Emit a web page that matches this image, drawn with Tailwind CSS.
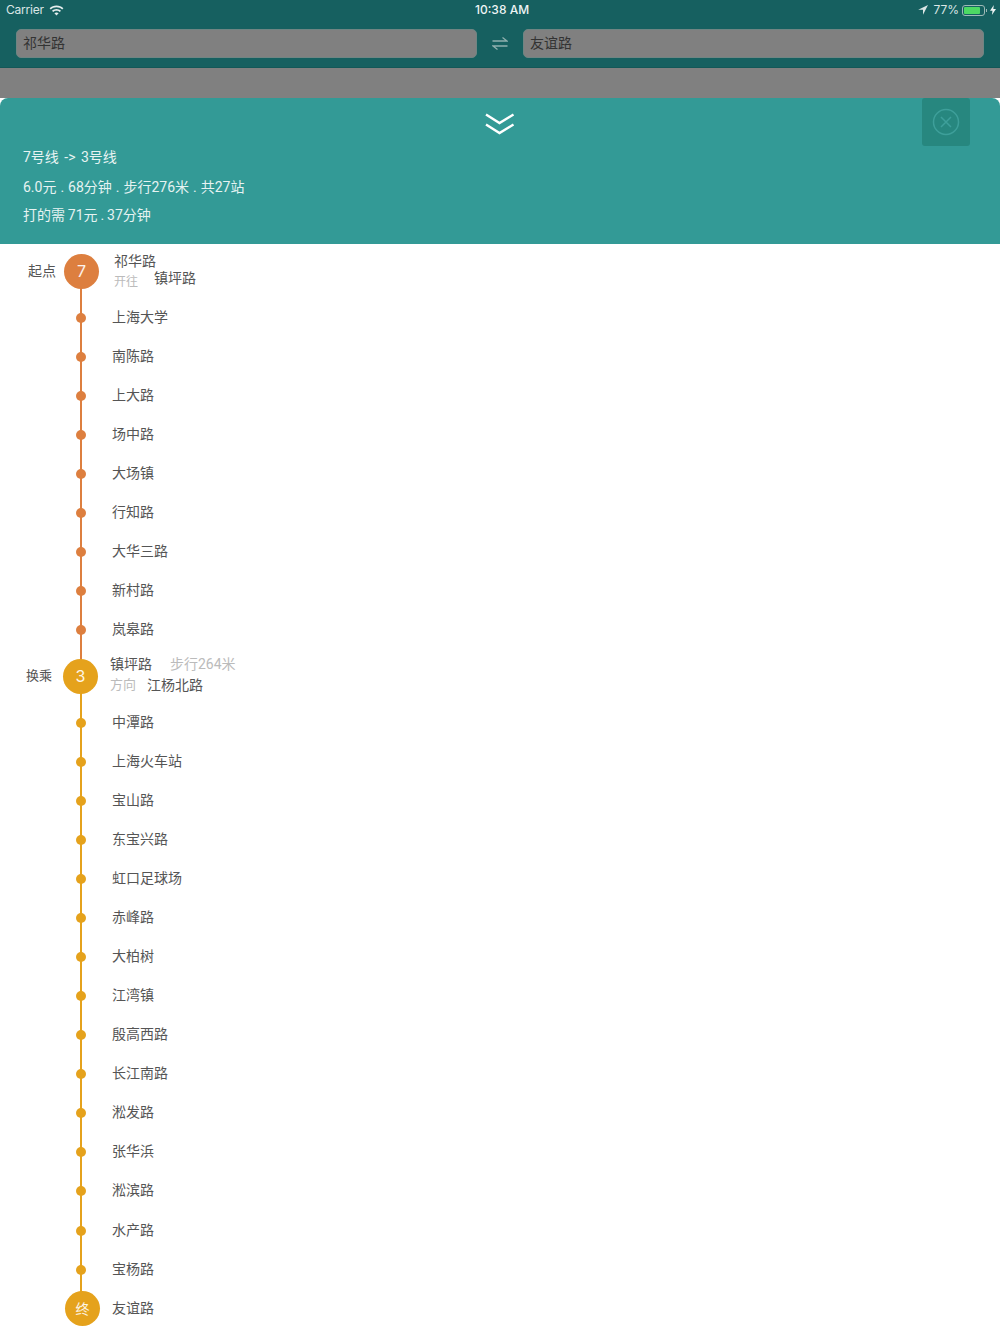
<!doctype html>
<html>

<head>
  <meta charset="UTF-8" />
  <meta name="viewport" content="width=device-width, initial-scale=1.0" />
  <script src="https://cdn.jsdelivr.net/npm/@tailwindcss/browser@4"></script>
  <title>Route</title>
</head>

<body class="bg-white font-['Inter','Noto_Sans_CJK_SC',sans-serif]">
  <div class="h-[1334px] overflow-hidden flex flex-col">
    <!-- header, dimmed by the sheet -->
    <div class="h-[68px] bg-[#166060] border-b border-[#135757] shrink-0">
      <div class="h-[20px] relative flex items-center justify-between pl-[6px] pr-[4px] text-[12px] text-[#dbe6e5]">
        <div class="flex items-center gap-[5px]">
          <span class="tracking-[-0.2px]">Carrier</span>
          <svg width="15" height="11" viewBox="0 0 15 11" fill="#e4eded">
            <path d="M7.5 0.5C4.8 0.5 2.4 1.5 0.6 3.2L1.8 4.5C3.3 3.1 5.3 2.3 7.5 2.3s4.2 .8 5.7 2.2l1.2-1.3C12.6 1.5 10.2 .5 7.5 .5z" />
            <path d="M7.5 4C5.8 4 4.200 4.700 3 5.800L4.200 7.100C5.100 6.300 6.200 5.800 7.500 5.800s2.400 .5 3.300 1.300L12 5.800C10.800 4.700 9.200 4 7.500 4z" />
            <path d="M7.500 7.400C6.700 7.400 6 7.700 5.400 8.200L7.500 10.500l2.100-2.300C9 7.700 8.300 7.400 7.500 7.400z" />
          </svg>
        </div>
        <span class="absolute left-[475px] font-medium text-[#eef4f4]">10:38 AM</span>
        <div class="flex items-center">
          <svg width="10" height="10" viewBox="0 0 10 10" fill="#dbe6e5" class="mr-[5px]">
            <path d="M10 0L0.200 4.700H5V9.800z" />
          </svg>
          <span>77%</span>
          <div class="ml-[3px] w-[23px] h-[11px] border border-[#9fb9b7] rounded-[3px] p-[1px]">
            <div class="h-full w-[16px] bg-[#4cd964] rounded-[1px]"></div>
          </div>
          <div class="w-[1px] h-[3px] bg-[#9fb9b7] ml-[1px] mr-[3px]"></div>
          <svg width="6" height="10" viewBox="0 0 6 10" fill="#eef4f4">
            <path d="M3.800 0L0 5.700H2.500L1.900 10L6 4H3.300z" />
          </svg>
        </div>
      </div>
      <div class="flex items-center pl-[16px] pr-[16px] pt-[9px]">
        <div class="w-[461px] h-[29px] bg-[#808080] border border-[#6f8583] rounded-[5px] pl-[6px] pb-[2px] flex items-center text-[14px] text-[#333]">祁华路</div>
        <div class="w-[46px] flex justify-center">
          <svg width="16" height="13" viewBox="0 0 16 13" fill="none" stroke="#8fb0ae" stroke-width="1.300">
            <path d="M0.500 4H15L10.500 0.500" />
            <path d="M15.500 9H1L5.500 12.500" />
          </svg>
        </div>
        <div class="w-[461px] h-[29px] bg-[#808080] border border-[#6f8583] rounded-[5px] pl-[6px] pb-[2px] flex items-center text-[14px] text-[#333]">友谊路</div>
      </div>
    </div>
    <div class="h-[30px] bg-[#808080] shrink-0"></div>

    <!-- route summary -->
    <div class="relative h-[146px] bg-[#339a96] rounded-t-[8px] shrink-0 text-[14px] text-[#e6f3f2] font-['Roboto','Noto_Sans_CJK_SC',sans-serif]">
      <svg class="absolute left-[485px] top-[15px]" width="30" height="24" viewBox="0 0 30 24" fill="none" stroke="#ffffff" stroke-width="2.400">
        <path d="M1 1.500L14.500 10L28.500 1.500" />
        <path d="M1 11.500L14.500 20L28.500 11.500" />
      </svg>
      <div class="absolute left-[922px] top-0 w-[48px] h-[48px] bg-[#27877f] rounded-[3px] flex items-center justify-center">
        <svg width="28" height="28" viewBox="0 0 28 28" fill="none" stroke="#3e9f9a" stroke-width="1.500">
          <circle cx="14" cy="14" r="12.500" />
          <path d="M9 9L19 19M19 9L9 19" />
        </svg>
      </div>
      <div class="pl-[23px] pt-[50px] flex flex-col">
        <div class="h-[19px] leading-[19px] [word-spacing:2px]">7号线 -&gt; 3号线</div>
        <div class="h-[19px] leading-[19px] mt-[11px] [word-spacing:0.5px]">6.0元 . 68分钟 . 步行276米 . 共27站</div>
        <div class="h-[19px] leading-[19px] mt-[9px] [word-spacing:-0.6px]">打的需 71元 . 37分钟</div>
      </div>
    </div>

    <!-- stations -->
    <div id="stations" class="flex flex-col text-[14px] text-[#555]">
      <div class="relative h-[54px] flex items-center shrink-0">
        <div class="absolute left-[80px] top-1/2 bottom-0 w-[2px] bg-[#dd7f3f]"></div>
        <div class="w-[64px] pl-[28px] pb-[2px] text-[14px] text-[#555]">起点</div>
        <div class="relative w-[35px] h-[35px] rounded-full bg-[#dd7f3f] text-white/90 text-[16px] flex items-center justify-center">7</div>
        <div class="ml-[15px] pb-[6px]">
          <div class="h-[19px] leading-[19px]">祁华路</div>
          <div class="flex items-center h-[16px]">
            <span class="w-[40px] text-[12px] text-[#bbb] pt-[8px]">开往</span>
            <span>镇坪路</span>
          </div>
        </div>
      </div>
      <div id="orange"></div>
      <div class="relative h-[53.6px] flex items-center shrink-0">
        <div class="absolute left-[80px] top-0 h-1/2 w-[2px] bg-[#dd7f3f]"></div>
        <div class="absolute left-[80px] top-1/2 bottom-0 w-[2px] bg-[#e5a21c]"></div>
        <div class="w-[63px] pl-[26px] pb-[2px] text-[13px] text-[#555]">换乘</div>
        <div class="relative w-[35px] h-[35px] rounded-full bg-[#e5a21c] text-white/90 text-[16px] flex items-center justify-center">3</div>
        <div class="ml-[12px] pb-[4px]">
          <div class="flex h-[21px] leading-[21px]">
            <span class="w-[60px]">镇坪路</span>
            <span class="text-[#bbb] pt-[1px] font-['Roboto','Noto_Sans_CJK_SC',sans-serif]">步行264米</span>
          </div>
          <div class="flex h-[21px] leading-[21px]">
            <span class="w-[37px] text-[13px] text-[#bbb]">方向</span>
            <span>江杨北路</span>
          </div>
        </div>
      </div>
      <div id="yellow"></div>
      <div class="relative h-[39.07px] flex items-center shrink-0">
        <div class="absolute left-[80px] top-0 h-1/2 w-[2px] bg-[#e5a21c]"></div>
        <div class="w-[65px]"></div>
        <div class="relative w-[35px] h-[35px] rounded-full bg-[#e5a21c] text-white/90 text-[14px] flex items-center justify-center">终</div>
        <div class="ml-[12px] pb-[3px]">友谊路</div>
      </div>
    </div>
  </div>
  <script>
    let row = (name, lineClass) => `
      <div class="relative h-[39.07px] flex items-center shrink-0">
        <div class="absolute left-[80px] top-0 bottom-0 w-[2px] ${lineClass}"></div>
        <div class="relative ml-[76px] w-[10px] h-[10px] rounded-full ${lineClass}"></div>
        <div class="ml-[26px] pb-[3px]">${name}</div>
      </div>`;

    let orange = ["上海大学", "南陈路", "上大路", "场中路", "大场镇", "行知路", "大华三路", "新村路", "岚皋路"];
    let yellow = ["中潭路", "上海火车站", "宝山路", "东宝兴路", "虹口足球场", "赤峰路", "大柏树", "江湾镇", "殷高西路", "长江南路", "淞发路", "张华浜", "淞滨路", "水产路", "宝杨路"];

    document.getElementById("orange").innerHTML = orange.map((n) => row(n, "bg-[#dd7f3f]")).join("");
    document.getElementById("yellow").innerHTML = yellow.map((n) => row(n, "bg-[#e5a21c]")).join("");
  </script>
</body>

</html>
